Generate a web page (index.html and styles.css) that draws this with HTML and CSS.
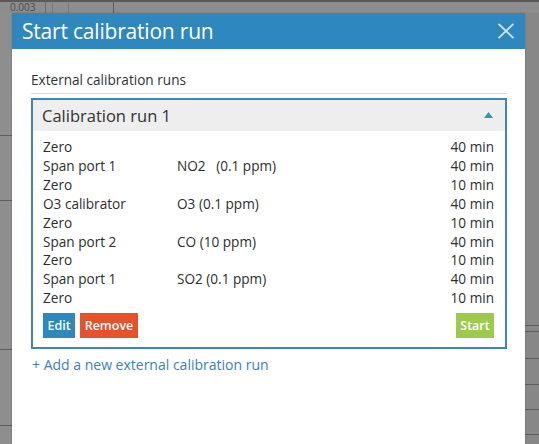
FILE: index.html
```html
<!DOCTYPE html>
<html>
<head>
<meta charset="utf-8">
<link rel="stylesheet" href="styles.css">
</head>
<body>
<div class="backdrop">
  <div class="topbar">
    <div class="cell c1">0.003</div>
    <div class="cell c2"></div>
    <div class="cell c3"></div>
    <div class="cell c4"></div>
    <div class="cell c5"></div>
  </div>
  <div class="bgrow">
    <div class="bgcol left">
      <div class="r" style="height:122px"></div>
      <div class="r" style="height:64px"></div>
      <div class="r" style="height:148px"></div>
      <div class="r" style="height:75px"></div>
    </div>
    <div class="bgspace"></div>
    <div class="bgcol right">
      <div class="r" style="height:312px"></div>
      <div class="r" style="height:5px"></div>
      <div class="r" style="height:26px"></div>
      <div class="r" style="height:25px"></div>
      <div class="r" style="height:24px"></div>
      <div class="r" style="height:24px"></div>
    </div>
  </div>
</div>

<div class="modal">
  <div class="modal-header">
    <h1 class="modal-title">Start calibration run</h1>
    <svg class="close" width="18" height="16" viewBox="0 0 18 16">
      <path d="M1.5 0.8 L16.5 15.2 M16.5 0.8 L1.5 15.2" stroke="#cfe4f2" stroke-width="1.8" fill="none"/>
    </svg>
  </div>
  <div class="modal-body">
    <div class="section-title">External calibration runs</div>
    <div class="panel">
      <div class="panel-header">
        <span class="panel-title">Calibration run 1</span>
        <svg class="caret" width="9" height="6" viewBox="0 0 9 6"><path d="M0 6 L4.5 0 L9 6 Z" fill="#3f8fae"/></svg>
      </div>
      <div class="steps">
        <div class="step"><span class="s-name">Zero</span><span class="s-gas"></span><span class="s-time">40 min</span></div>
        <div class="step"><span class="s-name">Span port 1</span><span class="s-gas">NO2&nbsp;&nbsp; (0.1 ppm)</span><span class="s-time">40 min</span></div>
        <div class="step"><span class="s-name">Zero</span><span class="s-gas"></span><span class="s-time">10 min</span></div>
        <div class="step"><span class="s-name">O3 calibrator</span><span class="s-gas">O3 (0.1 ppm)</span><span class="s-time">40 min</span></div>
        <div class="step"><span class="s-name">Zero</span><span class="s-gas"></span><span class="s-time">10 min</span></div>
        <div class="step"><span class="s-name">Span port 2</span><span class="s-gas">CO (10 ppm)</span><span class="s-time">40 min</span></div>
        <div class="step"><span class="s-name">Zero</span><span class="s-gas"></span><span class="s-time">10 min</span></div>
        <div class="step"><span class="s-name">Span port 1</span><span class="s-gas">SO2 (0.1 ppm)</span><span class="s-time">40 min</span></div>
        <div class="step"><span class="s-name">Zero</span><span class="s-gas"></span><span class="s-time">10 min</span></div>
      </div>
      <div class="actions">
        <button class="btn btn-edit">Edit</button>
        <button class="btn btn-remove">Remove</button>
        <span class="grow"></span>
        <button class="btn btn-start">Start</button>
      </div>
    </div>
    <a class="add-link">+ Add a new external calibration run</a>
  </div>
</div>
</body>
</html>
```

FILE: styles.css
```css
html, body {
  margin: 0;
  padding: 0;
}
body {
  width: 539px;
  height: 444px;
  overflow: hidden;
  background: #8b8b8b;
  font-family: "Open Sans", "Noto Sans", sans-serif;
  position: relative;
}

/* backdrop page beneath the dialog */
.backdrop {
  display: flex;
  flex-direction: column;
  height: 444px;
}
.topbar {
  display: flex;
  height: 13px;
  border-top: 2px solid #5a5a5a;
  box-sizing: border-box;
  background: #8d8d8d;
}
.cell {
  border-right: 1px solid #6a6a6a;
  box-sizing: border-box;
  height: 100%;
}
.c1 {
  width: 46px;
  padding-left: 10px;
  font-size: 10px;
  line-height: 11px;
  color: #4a4a4a;
}
.c2 { width: 7px; border-right-color: #7b7b7b; }
.c3 { width: 16px; border-right-color: #7b7b7b; }
.c4 { width: 45px; border-right-color: #5e5e5e; }
.c5 { flex: 1; border-right: none; }

.bgrow {
  flex: 1;
  display: flex;
}
.bgcol {
  display: flex;
  flex-direction: column;
}
.bgcol.left { width: 12px; background: #8e8e8e; }
.bgcol.right { width: 14px; background: #878787; }
.bgspace { flex: 1; }
.r {
  border-bottom: 1px solid #5d5d5d;
  flex: none;
}

/* dialog */
.modal {
  position: absolute;
  left: 12px;
  top: 13px;
  width: 513px;
  height: 440px;
  background: #fff;
  box-shadow: 0 0 2px rgba(0,0,0,0.2);
}
.modal-header {
  height: 36px;
  background: #2e87bf;
  display: flex;
  align-items: center;
  padding: 0 10px;
}
.modal-title {
  flex: 1;
  margin: 0;
  font-weight: normal;
  font-size: 21px;
  color: #fff;
  letter-spacing: -0.2px;
  line-height: 36px;
}
.close {
  margin-top: -1px;
}

.modal-body {
  padding: 21px 18px 0 19px;
}
.section-title {
  font-size: 13.6px;
  line-height: 20px;
  color: #333;
  padding-bottom: 3px;
  border-bottom: 1px solid #dcdcdc;
}
.panel {
  margin-top: 4px;
  border: 2px solid #3f86b4;
  height: 251px;
  box-sizing: border-box;
  display: flex;
  flex-direction: column;
}
.panel-header {
  height: 31px;
  background: #eeeeee;
  display: flex;
  align-items: center;
  padding: 0 12px 0 9px;
}
.panel-title {
  flex: 1;
  font-size: 16.5px;
  color: #333;
}
.caret {
  margin-top: -2px;
}
.steps {
  padding: 7px 11px 0 10px;
}
.step {
  display: flex;
  font-size: 13.6px;
  line-height: 18.9px;
  color: #2e2e2e;
  white-space: nowrap;
}
.s-name {
  width: 134px;
}
.s-gas {
  flex: 1;
}
.s-time {
  text-align: right;
}
.actions {
  display: flex;
  gap: 5px;
  padding: 5px 11px 0 10px;
}
.grow { flex: 1; }
.btn {
  border: none;
  height: 25px;
  padding: 0;
  font-family: "Open Sans", "Noto Sans", sans-serif;
  font-size: 12.5px;
  font-weight: 600;
  color: #fff;
  cursor: pointer;
}
.btn-edit { background: #2e87bf; width: 32px; }
.btn-remove { background: #e8522b; width: 58px; }
.btn-start { background: #9dc94c; width: 38px; }

.add-link {
  display: block;
  margin-top: 6px;
  padding-left: 1px;
  font-size: 14px;
  line-height: 20px;
  color: #3b80c2;
  cursor: pointer;
}
```
